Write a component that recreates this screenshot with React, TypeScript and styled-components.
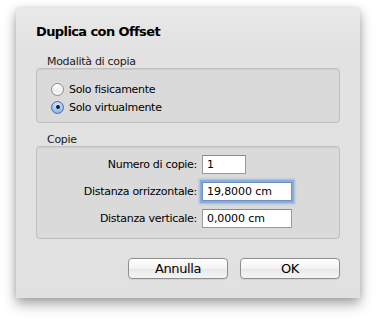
import React from "react";
import styled, { createGlobalStyle, css } from "styled-components";

const Global = createGlobalStyle`
  html, body { margin: 0; padding: 0; background: #ffffff; }
  body { font-family: "DejaVu Sans", "Liberation Sans", sans-serif; }
  * { box-sizing: border-box; }
`;

const Page = styled.div`
  padding: 8px 16px;
  width: 376px;
  height: 322px;
`;

const Dialog = styled.div`
  width: 344px;
  height: 290px;
  background: linear-gradient(#e9e9e9, #e2e2e2 40px, #e1e1e1);
  box-shadow: 0 6px 12px rgba(0, 0, 0, 0.35), 0 0 6px rgba(0, 0, 0, 0.12);
  padding: 16px 20px 19px 20px;
  display: flex;
  flex-direction: column;
`;

const Title = styled.div`
  font-size: 13px;
  font-weight: bold;
  line-height: 16px;
  color: #000;
  letter-spacing: -0.6px;
  margin-bottom: 15px;
`;

const SectionLabel = styled.div<{ $mt?: number }>`
  font-size: 11px;
  line-height: 13px;
  color: #1a1a1a;
  margin-left: 11px;
  margin-top: ${(p) => p.$mt ?? 0}px;
  letter-spacing: -0.3px;
`;

const GroupBox = styled.div<{ $pt: number; $pb: number }>`
  background: #dadada;
  border: 1px solid #bfbfbf;
  border-radius: 4px;
  box-shadow: inset 0 1px 1px rgba(0, 0, 0, 0.06);
  padding: ${(p) => p.$pt}px 0 ${(p) => p.$pb}px 0;
  display: flex;
  flex-direction: column;
`;

const RadioRow = styled.label`
  display: flex;
  align-items: center;
  height: 18px;
  padding-left: 14px;
  gap: 5px;
  font-size: 11px;
  color: #000;
  letter-spacing: -0.3px;
`;

const RadioCircle = styled.span<{ $on?: boolean }>`
  width: 13px;
  height: 13px;
  border-radius: 50%;
  display: flex;
  align-items: center;
  justify-content: center;
  ${(p) =>
    p.$on
      ? css`
          border: 1px solid #4d6f9f;
          background: radial-gradient(circle at 50% 30%, #d9ecff, #9cc4ef 60%, #6f9fdc);
        `
      : css`
          border: 1px solid #8c8c8c;
          background: linear-gradient(#ffffff, #eeeeee 60%, #f8f8f8);
        `}
`;

const Dot = styled.span`
  width: 4px;
  height: 4px;
  border-radius: 50%;
  background: #1a1a1a;
`;

const FieldGrid = styled.div`
  display: grid;
  grid-template-columns: 160px auto;
  column-gap: 5px;
  row-gap: 8px;
  align-items: center;
`;

const FieldLabel = styled.div`
  text-align: right;
  font-size: 11px;
  color: #000;
  letter-spacing: -0.3px;
`;

const Input = styled.div<{ $w: number; $focus?: boolean }>`
  width: ${(p) => p.$w}px;
  height: 19px;
  background: #fff;
  border: 1px solid #9b9b9b;
  border-top-color: #8a8a8a;
  font-size: 11px;
  line-height: 17px;
  padding-left: 4px;
  color: #000;
  letter-spacing: -0.1px;
  ${(p) =>
    p.$focus &&
    css`
      border-color: #6f8fbf;
      box-shadow: 0 0 0 2px #88acdb, 0 0 2px 3px rgba(100, 150, 220, 0.5);
    `}
`;

const ButtonRow = styled.div`
  margin-top: auto;
  display: flex;
  justify-content: flex-end;
  gap: 12px;
`;

const Button = styled.button`
  width: 100px;
  height: 21px;
  border: 1px solid #8e8e8e;
  border-radius: 4px;
  background: linear-gradient(#ffffff, #f3f3f3 50%, #e8e8e8 51%, #f4f4f4);
  box-shadow: 0 1px 1px rgba(0, 0, 0, 0.08);
  font-family: "DejaVu Sans", sans-serif;
  font-size: 13px;
  line-height: 19px;
  padding: 0;
  color: #000;
  letter-spacing: -0.4px;
`;

export default function App() {
  return (
    <Page>
      <Global />
      <Dialog>
        <Title>Duplica con Offset</Title>
        <SectionLabel>Modalità di copia</SectionLabel>
        <GroupBox $pt={11} $pb={6}>
          <RadioRow>
            <RadioCircle />
            Solo fisicamente
          </RadioRow>
          <RadioRow>
            <RadioCircle $on>
              <Dot />
            </RadioCircle>
            Solo virtualmente
          </RadioRow>
        </GroupBox>
        <SectionLabel $mt={10}>Copie</SectionLabel>
        <GroupBox $pt={8} $pb={10}>
          <FieldGrid>
            <FieldLabel>Numero di copie:</FieldLabel>
            <Input $w={44}>1</Input>
            <FieldLabel>Distanza orrizzontale:</FieldLabel>
            <Input $w={90} $focus>19,8000 cm</Input>
            <FieldLabel>Distanza verticale:</FieldLabel>
            <Input $w={90}>0,0000 cm</Input>
          </FieldGrid>
        </GroupBox>
        <ButtonRow>
          <Button>Annulla</Button>
          <Button>OK</Button>
        </ButtonRow>
      </Dialog>
    </Page>
  );
}
